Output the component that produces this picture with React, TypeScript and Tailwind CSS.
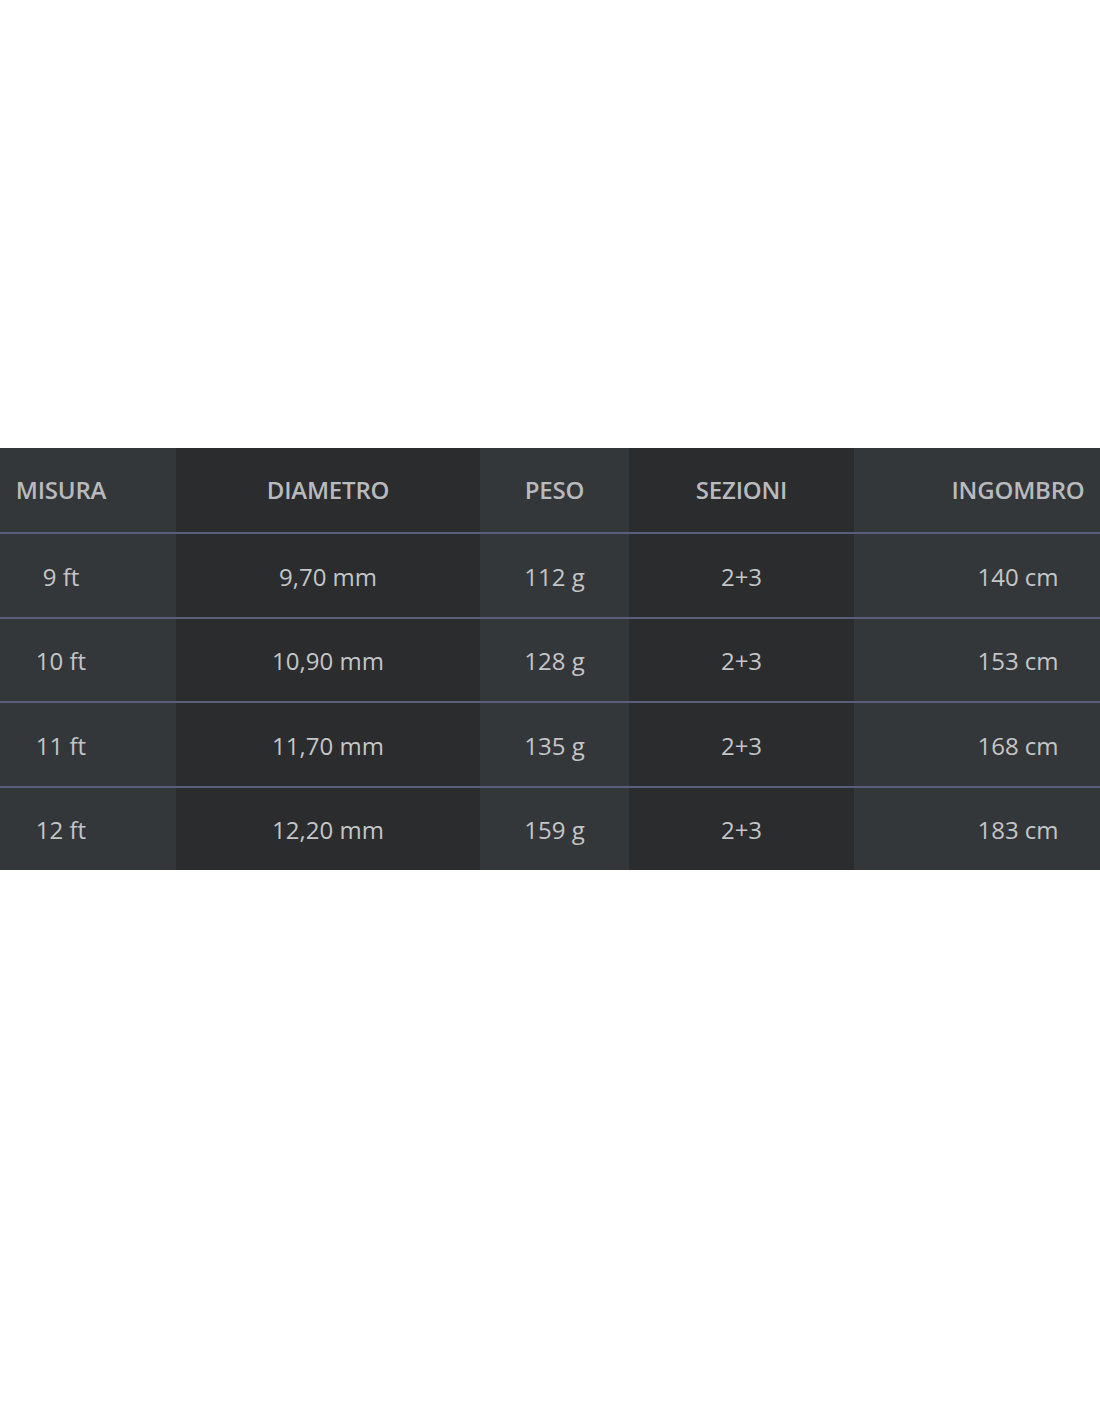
const COLS = [
	{ key: "misura", label: "MISURA", width: "w-[176px]", bg: "bg-[#34373a]", pad: "pr-[54px]" },
	{ key: "diametro", label: "DIAMETRO", width: "w-[304px]", bg: "bg-[#2a2c2e]", pad: "" },
	{ key: "peso", label: "PESO", width: "w-[149px]", bg: "bg-[#34373a]", pad: "" },
	{ key: "sezioni", label: "SEZIONI", width: "w-[225px]", bg: "bg-[#2a2c2e]", pad: "" },
	{ key: "ingombro", label: "INGOMBRO", width: "flex-1", bg: "bg-[#34373a]", pad: "pl-[82px]" },
];

const ROWS = [
	["9 ft", "9,70 mm", "112 g", "2+3", "140 cm"],
	["10 ft", "10,90 mm", "128 g", "2+3", "153 cm"],
	["11 ft", "11,70 mm", "135 g", "2+3", "168 cm"],
	["12 ft", "12,20 mm", "159 g", "2+3", "183 cm"],
];

export default function App() {
	return (
		<div className="min-h-[1422px] bg-white pt-[448px] font-['Open_Sans',sans-serif]">
			{/* Spec table */}
			<div className="w-full">
				<div className="flex h-[84px]">
					{COLS.map((col) => (
						<div
							key={col.key}
							className={`${col.width} ${col.bg} ${col.pad} flex items-center justify-center text-[24px] font-semibold text-[#b9babd] tracking-[-0.2px]`}
						>
							{col.label}
						</div>
					))}
				</div>
				{ROWS.map((row) => (
					<div key={row[0]} className="flex h-[84.5px] border-t-2 border-[#5a5e78]">
						{COLS.map((col, i) => (
							<div
								key={col.key}
								className={`${col.width} ${col.bg} ${col.pad} flex items-center justify-center pt-[3px] text-[24px] font-normal text-[#c4c5c7]`}
							>
								{row[i]}
							</div>
						))}
					</div>
				))}
			</div>
		</div>
	);
}
